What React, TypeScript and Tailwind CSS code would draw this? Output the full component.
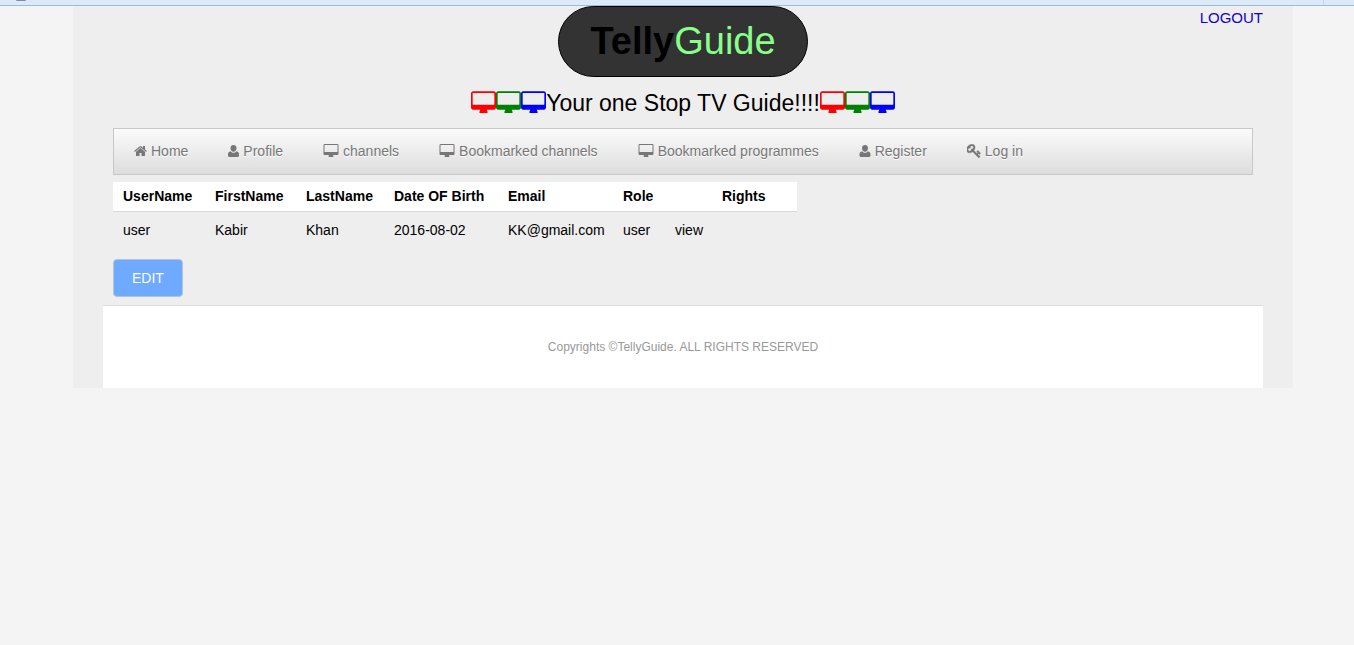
import React from "react";

const paths = {
  home: {
    box: "64 0 1664 1792",
    d: "M1472 992v480q0 26-19 45t-45 19h-384v-384h-256v384h-384q-26 0-45-19t-19-45v-480q0-1 .5-3t.5-3l575-474 575 474q1 2 1 6zm223-69l-62 74q-8 9-21 11h-3q-13 0-21-7l-692-577-692 577q-12 8-24 7-13-2-21-11l-62-74q-8-10-7-23.5t11-21.5l719-599q32-26 76-26t76 26l244 204v-195q0-14 9-23t23-9h192q14 0 23 9t9 23v408l219 182q10 8 11 21.5t-7 23.5z",
  },
  user: {
    box: "0 0 11 14",
    d: "M5.5 1C7.300 1 8.500 2.200 8.500 4.100C8.500 6.200 7.200 7.800 5.500 7.800C3.800 7.800 2.500 6.200 2.500 4.100C2.500 2.200 3.700 1 5.500 1ZM2.700 7.200C3.400 8.200 4.400 8.700 5.500 8.700C6.600 8.700 7.600 8.200 8.300 7.200C10.200 7.500 11 8.700 11 10.600V11.500C11 12.400 10.400 13 9.500 13H1.500C.6 13 0 12.400 0 11.500V10.600C0 8.700 .8 7.500 2.700 7.200Z",
  },
  desktop: {
    box: "-64 0 1920 1792",
    d: "M1728 992v-832q0-13-9.5-22.5t-22.5-9.5h-1600q-13 0-22.5 9.5t-9.5 22.5v832q0 13 9.5 22.5t22.5 9.5h1600q13 0 22.5-9.5t9.5-22.5zm128-832v1088q0 66-47 113t-113 47h-544q0 37 16 77.5t32 71 16 43.5q0 26-19 45t-45 19h-512q-26 0-45-19t-19-45q0-14 16-44t32-70 16-78h-544q-66 0-113-47t-47-113v-1088q0-66 47-113t113-47h1600q66 0 113 47t47 113z",
  },
  key: {
    box: "64 100 1664 1664",
    d: "M832 512q0-80-56-136t-136-56-136 56-56 136q0 42 19 83-41-19-83-19-80 0-136 56t-56 136 56 136 136 56 136-56 56-136q0-42-19-83 41 19 83 19 80 0 136-56t56-136zm851 704q0 17-49 66t-66 49q-9 0-28.5-16t-36.5-33-38.5-40-24.5-26l-96 96 220 220q28 28 28 68 0 42-39 81t-81 39q-40 0-68-28l-671-671q-176 131-365 131-163 0-265.5-102.5t-102.5-265.5q0-160 95-313t248-248 313-95q163 0 265.5 102.5t102.5 265.5q0 189-131 365l355 355 96-96q-3-3-26-24.5t-40-38.5-33-36.5-16-28.5q0-17 49-66t66-49q13 0 23 10 6 6 46 44.5t82 79.5 86.5 86 73 78 28.5 41z",
  },
};

type IconName = keyof typeof paths;

function Icon({ name, className }: { name: IconName; className: string }) {
  return (
    <svg viewBox={paths[name].box} className={className} fill="currentColor" aria-hidden="true">
      <path d={paths[name].d} stroke="currentColor" strokeWidth={name === "key" ? 50 : 0} />
    </svg>
  );
}

const menu: { icon: IconName; size: string; label: string }[] = [
  { icon: "home", size: "h-3.5 w-[13px]", label: "Home" },
  { icon: "user", size: "h-3.5 w-[11px]", label: "Profile" },
  { icon: "desktop", size: "h-3.5 w-4", label: "channels" },
  { icon: "desktop", size: "h-3.5 w-4", label: "Bookmarked channels" },
  { icon: "desktop", size: "h-3.5 w-4", label: "Bookmarked programmes" },
  { icon: "user", size: "h-3.5 w-3", label: "Register" },
  { icon: "key", size: "h-3.5 w-3.5", label: "Log in" },
];

const columns = [
  { label: "UserName", width: "w-[92px]" },
  { label: "FirstName", width: "w-[91px]" },
  { label: "LastName", width: "w-[88px]" },
  { label: "Date OF Birth", width: "w-[114px]" },
  { label: "Email", width: "w-[115px]" },
  { label: "Role", width: "w-[52px]" },
  { label: "", width: "w-[47px]" },
  { label: "Rights", width: "w-[85px]" },
];

const row = ["user", "Kabir", "Khan", "2016-08-02", "KK@gmail.com", "user", "view", ""];

function Screens() {
  return (
    <span className="flex">
      <Icon name="desktop" className="h-6 w-[25px] text-[#ff0000]" />
      <Icon name="desktop" className="h-6 w-[25px] text-[#008000]" />
      <Icon name="desktop" className="h-6 w-[25px] text-[#0000ff]" />
    </span>
  );
}

export default function App() {
  return (
    <div className="min-h-screen bg-[#f4f4f4] font-['Liberation_Sans',Arial,sans-serif] text-sm text-black">
      <div className="flex h-1.5 items-start border-b border-[#a0bbd8] bg-[#dbe9f8] pl-4">
        <div className="h-px w-2.5 rounded-b-full bg-[#7f8da8]" />
        <div className="mr-[30px] ml-auto h-[5px] w-px bg-[#c4d6ea]" />
      </div>
      <div className="pl-3">
        <div className="mx-auto max-w-[1220px] bg-[#eeeeee] px-[30px]">
          <header className="relative flex flex-col items-center">
            <a href="#logout" className="absolute top-0 right-0 pt-0.5 text-[15px] leading-5 text-[#1400c8]">
              LOGOUT
            </a>
            <h1 className="flex h-[71px] items-center rounded-full border border-black bg-[#333333] px-[31px] pb-0.5 text-[38px] leading-none">
              <b>Telly</b>
              <span className="text-[#88ff88]">Guide</span>
            </h1>
            <h2 className="flex h-[51px] items-center justify-center text-[23px] leading-7">
              <Screens />
              <span>Your one Stop TV Guide!!!!</span>
              <Screens />
            </h2>
          </header>
          <main className="px-2.5">
            <nav className="border border-[#c8c8c8] bg-linear-to-b from-[#fbfbfb] to-[#dddddd]">
              <ul className="flex flex-wrap">
                {menu.map((item) => (
                  <li key={item.label}>
                    <a
                      href="#menu"
                      className="flex h-[45px] items-center gap-1 px-5 pb-0.5 text-[#777777] [text-shadow:0_1px_0_#ffffff]"
                    >
                      <Icon name={item.icon} className={item.size} />
                      {item.label}
                    </a>
                  </li>
                ))}
              </ul>
            </nav>
            <table className="mt-[7px] w-[684px] table-fixed border-collapse text-left leading-5">
              <thead>
                <tr className="h-[29px] border-b border-[#d8d8d8] bg-white">
                  {columns.map((c) => (
                    <th key={c.label} className={`${c.width} px-2.5 font-bold whitespace-nowrap`}>
                      {c.label}
                    </th>
                  ))}
                </tr>
              </thead>
              <tbody>
                <tr className="h-[37px]">
                  {row.map((cell, i) => (
                    <td key={i} className="px-2.5 whitespace-nowrap">
                      {cell}
                    </td>
                  ))}
                </tr>
              </tbody>
            </table>
            <button
              type="button"
              className="mt-[11px] mb-2 block h-[38px] rounded border border-[#b3c4d9] bg-[#6eaaff] px-[18px] text-white"
            >
              EDIT
            </button>
          </main>
          <footer className="border-t border-[#dddddd] bg-white py-8 text-center text-xs leading-[18px] text-[#999999]">
            Copyrights ©TellyGuide. ALL RIGHTS RESERVED
          </footer>
        </div>
      </div>
    </div>
  );
}
